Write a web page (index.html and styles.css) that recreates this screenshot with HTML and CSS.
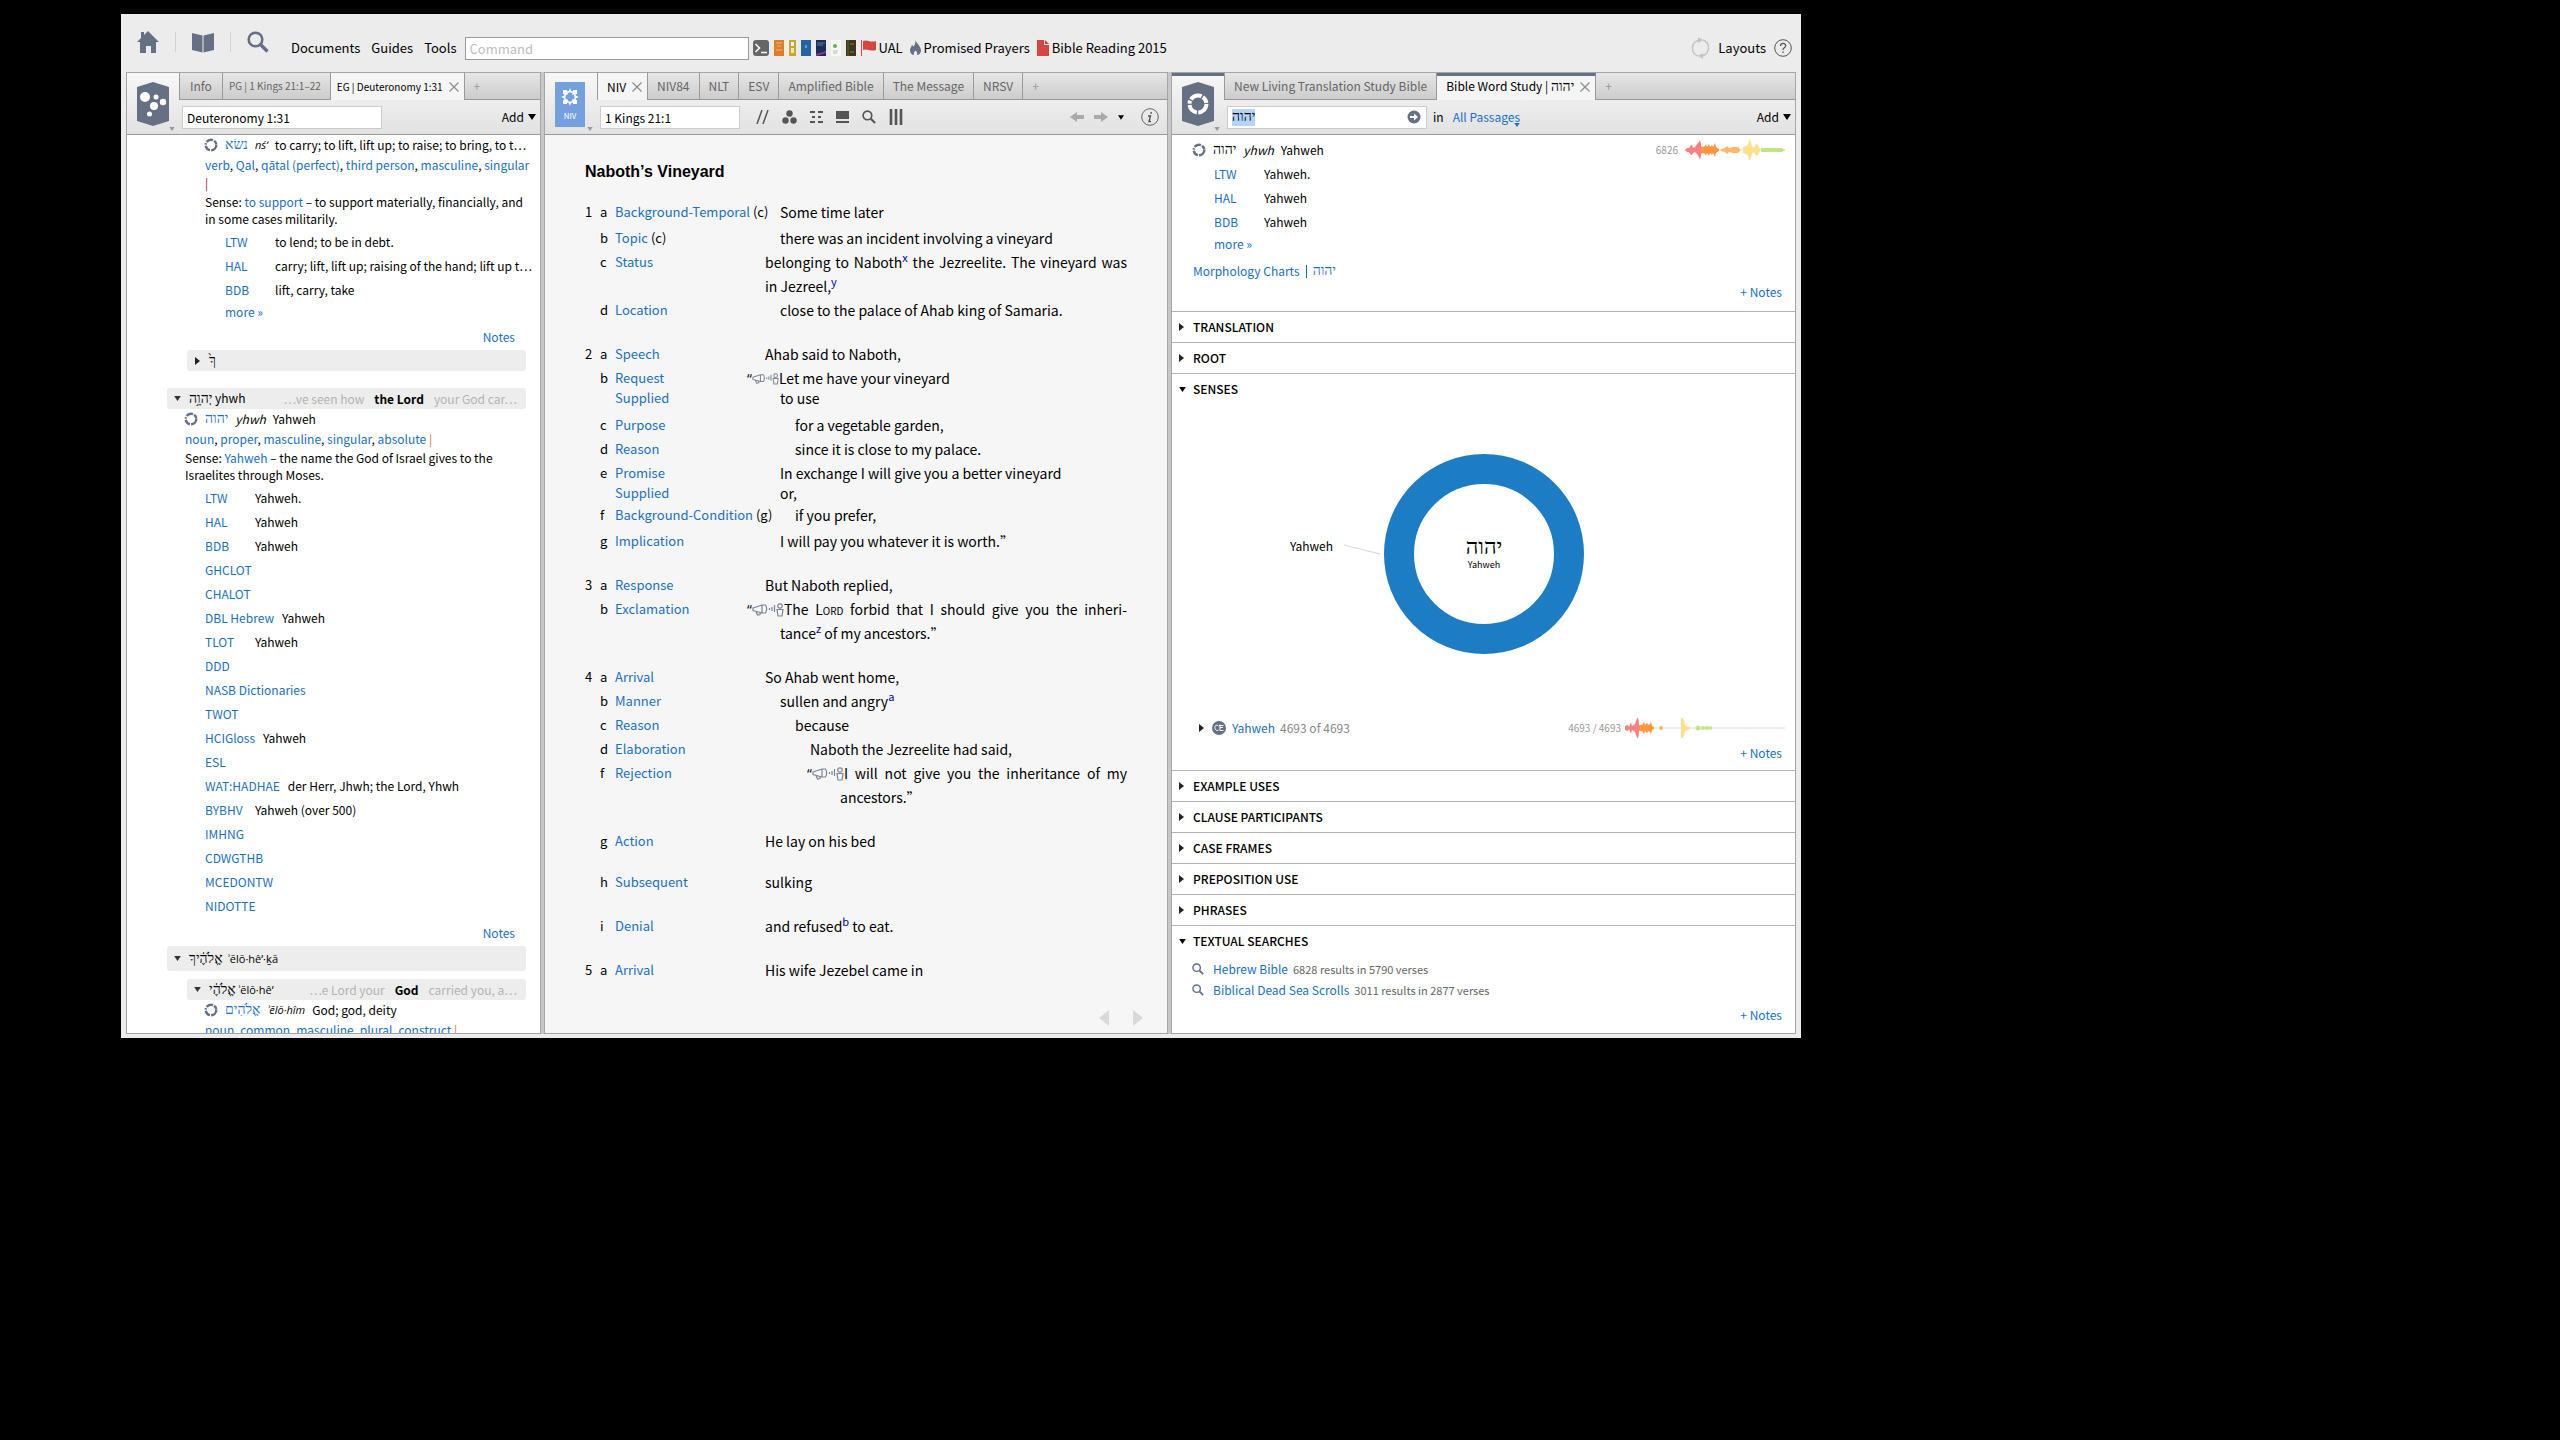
FILE: index.html
```html
<!DOCTYPE html>
<html lang="en">
<head>
    <meta charset="UTF-8">
    <meta name="viewport" content="width=device-width, initial-scale=1.0">
    <title>Bible Word Study</title>
    <link rel="stylesheet" href="styles.css">
</head>
<body>
<!-- shared icons -->
<svg class="sprite" aria-hidden="true">
    <symbol id="ring" viewBox="0 0 14 14">
        <circle cx="7" cy="7" r="5.3" fill="none" stroke="#667085" stroke-width="2.4" stroke-dasharray="8 1.2 6.2 1.2 1.6 1.2 7 1.2 4.5 1.4"/>
    </symbol>
    <symbol id="lens" viewBox="0 0 22 22">
        <circle cx="8.5" cy="8.5" r="6.8" fill="none" stroke="currentColor" stroke-width="2.6"/>
        <path d="M13.5 13.5L20.5 20.5" stroke="currentColor" stroke-width="3.4"/>
    </symbol>
    <symbol id="right" viewBox="0 0 5 8"><path d="M0 0L5 4L0 8z" fill="#222"/></symbol>
    <symbol id="down" viewBox="0 0 8 6"><path d="M0 0H8L4 6z" fill="currentColor"/></symbol>
    <symbol id="close" viewBox="0 0 12 12"><path d="M1.500 1.500L10.500 10.500M10.500 1.500L1.500 10.500" stroke="#8b8b8b" stroke-width="1.200"/></symbol>
    <symbol id="speech" viewBox="0 0 32 14">
        <g fill="none" stroke="#7b8496" stroke-width="1.200">
            <path d="M1 5L10 2H13.500C15 4 15 8 13.500 10H10L1 7.500z M10 2V10 M4 8.500L5.500 12L8 11.500V9.500"/>
            <path d="M17.500 5V7M20 4V8M22.500 2V9"/>
            <circle cx="28" cy="3" r="2.200"/>
            <path d="M25 6.500H31L30 13H26z"/>
        </g>
    </symbol>
</svg>

<div class="app">
    <header class="topbar">
        <div class="launch">
            <button type="button" aria-label="Home">
                <svg width="22" height="22" viewBox="0 0 22 22"><path d="M4 1h3v3l4-4 11 11h-3v11h-5v-7h-5v7H3V11H0L4 7z" fill="#667085"/></svg>
            </button>
            <i class="sep"></i>
            <button type="button" aria-label="Library">
                <svg width="22" height="22" viewBox="0 0 22 22"><path d="M0 2L10.500 4.500V21.500L0 19zM22 2L11.500 4.500V21.500L22 19z" fill="#667085"/></svg>
            </button>
            <i class="sep"></i>
            <button type="button" aria-label="Search">
                <svg class="slate" width="22" height="22"><use href="#lens"/></svg>
            </button>
        </div>
        <nav class="menu">
            <button type="button">Documents</button>
            <button type="button">Guides</button>
            <button type="button">Tools</button>
        </nav>
        <input class="command" type="text" placeholder="Command" aria-label="Command">
        <div class="shortcuts">
            <svg width="16" height="16" viewBox="0 0 16 16"><rect width="16" height="16" rx="3" fill="#666"/><path d="M2.500 4L6.500 8L2.500 12M8 12.500H14" stroke="#fff" stroke-width="1.500" fill="none"/></svg>
            <svg width="10" height="16" viewBox="0 0 10 16"><rect width="10" height="16" fill="#dd7e2b"/><path d="M2 3h6M3 6h4M2 10h6" stroke="#f0b47c"/></svg>
            <svg width="7" height="16" viewBox="0 0 7 16"><rect width="7" height="16" fill="#cfa52a"/><rect x="2" y="2" width="3" height="4" fill="#fff"/><rect x="2" y="8" width="3" height="5" fill="#f3e6b8"/></svg>
            <svg width="10" height="16" viewBox="0 0 10 16"><rect width="10" height="16" fill="#2560a8"/><rect x="4" y="5" width="2" height="3" fill="#6b99cf"/></svg>
            <svg width="10" height="16" viewBox="0 0 10 16"><rect width="10" height="16" fill="#1f2a63"/><path d="M1 3h8M1 5h6" stroke="#4c8a80"/><path d="M0 14L10 11V13L0 16z" fill="#8a3b78"/></svg>
            <svg width="10" height="16" viewBox="0 0 10 16"><rect width="10" height="16" fill="#f6f6f4"/><circle cx="4" cy="6" r="2" fill="#62b35a"/><path d="M2 11h5M2 13h4" stroke="#bbb"/></svg>
            <svg width="10" height="16" viewBox="0 0 10 16"><rect width="10" height="16" fill="#3f371c"/><path d="M2 0V16" stroke="#6a6033"/><path d="M4 4h4M4 12h4" stroke="#8b7f45"/></svg>
            <a href="#"><svg width="15" height="16" viewBox="0 0 15 16"><path d="M.5 0V16" stroke="#d64541"/><path d="M2 1C6-1 9 3 15 1V10C9 12 6 8 2 10z" fill="#d64541"/></svg>UAL</a>
            <a href="#"><svg width="11" height="16" viewBox="0 0 11 16"><path d="M5.500 0C6 3 11 6 11 10.500C11 13 9 15 7 15C7.500 13 7 12 5.500 10.500C4 12 3.500 13 4 15C2 15 0 13 0 10.500C0 8 1.500 7 2 5L3.500 6.500C5 5 5.500 3 5.500 0z" fill="#667085"/></svg>Promised Prayers</a>
            <a href="#"><svg width="12" height="16" viewBox="0 0 12 16"><path d="M0 0H7V5H12V16H0zM8 0L12 4H8z" fill="#d64541"/></svg>Bible Reading 2015</a>
        </div>
        <div class="session">
            <svg width="19" height="22" viewBox="0 0 19 22"><path d="M7 19C-1 16 0 5 8 3M12 3C20 6 19 17 11 19" fill="none" stroke="#c3c3c3" stroke-width="1.400"/><path d="M7 0L12 3L7 6zM12 16L7 19L12 22z" fill="#c3c3c3"/></svg>
            <button type="button">Layouts</button>
            <button type="button" aria-label="Help"><svg width="18" height="18" viewBox="0 0 18 18"><circle cx="9" cy="9" r="8.300" fill="none" stroke="#555"/><path d="M6.500 7C6.500 3.500 11.700 3.500 11.700 6.800C11.700 9 9 8.700 9 11M9 12.500V14" fill="none" stroke="#555" stroke-width="1.300"/></svg></button>
        </div>
    </header>

    <main class="panels">
        <section class="panel guide">
            <div class="panel-head">
                <div class="logo">
                    <svg width="32" height="44" viewBox="0 0 32 44"><path d="M0 5L16 0L32 5V39L16 44L0 39z" fill="#667085"/><g fill="#fff"><circle cx="8" cy="15" r="5"/><circle cx="19" cy="15" r="2.500"/><circle cx="26" cy="20" r="3.200"/><circle cx="17" cy="24" r="4"/><circle cx="12.500" cy="32" r="2.500"/></g></svg>
                    <svg class="logo-arrow" width="6" height="4"><use href="#down"/></svg>
                </div>
                <div class="tabs" role="tablist">
                    <button class="tab roomy" role="tab">Info</button>
                    <button class="tab tight" role="tab">PG | 1 Kings 21:1–22</button>
                    <button class="tab tight active" role="tab">EG | Deuteronomy 1:31 <svg width="12" height="12"><use href="#close"/></svg></button>
                    <button class="tab add-tab" aria-label="New tab">+</button>
                </div>
                <div class="tools">
                    <input class="ref-wide" type="text" value="Deuteronomy 1:31" aria-label="Passage">
                    <button class="add" type="button">Add <svg width="8" height="6"><use href="#down"/></svg></button>
                </div>
            </div>
            <div class="body guide-body">
                <div class="nested">
                    <div class="lemma"><svg width="14" height="14"><use href="#ring"/></svg><a href="#" lang="he">נשׂא</a><em class="translit">nśʼ</em><span class="gloss">to carry; to lift, lift up; to raise; to bring, to t…</span></div>
                    <div class="morph"><a href="#">verb</a>, <a href="#">Qal</a>, <a href="#">qātal (perfect)</a>, <a href="#">third person</a>, <a href="#">masculine</a>, <a href="#">singular</a><br><b class="bar maroon">|</b></div>
                    <p class="sense">Sense: <a href="#">to support</a> – to support materially, financially, and in some cases militarily.</p>
                    <ul class="lexicons">
                        <li><a href="#">LTW</a><span>to lend; to be in debt.</span></li>
                        <li><a href="#">HAL</a><span>carry; lift, lift up; raising of the hand; lift up t…</span></li>
                        <li><a href="#">BDB</a><span>lift, carry, take</span></li>
                    </ul>
                    <a class="more" href="#">more »</a>
                    <a class="notes" href="#">Notes</a>
                    <div class="word"><svg class="tri" width="5" height="8"><use href="#right"/></svg><span lang="he">ךָ֙</span></div>
                </div>
                <div class="word next"><svg class="tri" width="7" height="5"><use href="#down"/></svg><span><span lang="he">יְהוָ֣ה</span> yhwh</span>
                    <span class="context"><span>…ve seen how</span><b>the Lord</b><span>your God car…</span></span></div>
                <div class="entry">
                    <div class="lemma"><svg width="14" height="14"><use href="#ring"/></svg><a href="#" lang="he">יהוה</a><em>yhwh</em><span class="gloss">Yahweh</span></div>
                    <div class="morph"><a href="#">noun</a>, <a href="#">proper</a>, <a href="#">masculine</a>, <a href="#">singular</a>, <a href="#">absolute</a> <b class="bar orange">|</b></div>
                    <p class="sense">Sense: <a href="#">Yahweh</a> – the name the God of Israel gives to the Israelites through Moses.</p>
                    <ul class="lexicons">
                        <li><a href="#">LTW</a><span>Yahweh.</span></li>
                        <li><a href="#">HAL</a><span>Yahweh</span></li>
                        <li><a href="#">BDB</a><span>Yahweh</span></li>
                        <li><a href="#">GHCLOT</a></li>
                        <li><a href="#">CHALOT</a></li>
                        <li><a href="#">DBL Hebrew</a><span>Yahweh</span></li>
                        <li><a href="#">TLOT</a><span>Yahweh</span></li>
                        <li><a href="#">DDD</a></li>
                        <li><a href="#">NASB Dictionaries</a></li>
                        <li><a href="#">TWOT</a></li>
                        <li><a href="#">HCIGloss</a><span>Yahweh</span></li>
                        <li><a href="#">ESL</a></li>
                        <li><a href="#">WAT:HADHAE</a><span>der Herr, Jhwh; the Lord, Yhwh</span></li>
                        <li><a href="#">BYBHV</a><span>Yahweh (over 500)</span></li>
                        <li><a href="#">IMHNG</a></li>
                        <li><a href="#">CDWGTHB</a></li>
                        <li><a href="#">MCEDONTW</a></li>
                        <li><a href="#">NIDOTTE</a></li>
                    </ul>
                    <a class="notes" href="#">Notes</a>
                </div>
                <div class="word tall"><svg class="tri" width="7" height="5"><use href="#down"/></svg><span><span lang="he">אֱלֹהֶ֔יךָ</span> &nbsp;<span class="translit">ʾĕlō·hêʹ·ḵā</span></span></div>
                <div class="nested">
                    <div class="word"><svg class="tri" width="7" height="5"><use href="#down"/></svg><span><span lang="he">אֱלֹהֶ֔י</span> <span class="translit">ʾĕlō·hêʹ</span></span>
                        <span class="context"><span>…e Lord your</span><b>God</b><span>carried you, a…</span></span></div>
                    <div class="lemma"><svg width="14" height="14"><use href="#ring"/></svg><a href="#" lang="he">אֱלֹהִים</a><em class="translit">ʾĕlō·hîm</em><span class="gloss">God; god, deity</span></div>
                    <div class="morph"><a href="#">noun</a>, <a href="#">common</a>, <a href="#">masculine</a>, <a href="#">plural</a>, <a href="#">construct</a> <b class="bar orange">|</b></div>
                </div>
            </div>
        </section>

        <section class="panel bible">
            <div class="panel-head">
                <div class="logo">
                    <svg width="30" height="45" viewBox="0 0 30 45"><rect width="30" height="45" fill="#74a0e0"/><path d="M12 10H14L15 8L16 10H18V12H20V14L22 15L20 16V18H18V20H16L15 22L14 20H12V18H10V16L8 15L10 14V12H12z" fill="none" stroke="#fff" stroke-width="1.500"/><path d="M8 8h4v4h-4zM18 8h4v4h-4zM8 18h4v4h-4zM18 18h4v4h-4z" fill="#fff"/><text class="cover" x="15" y="37" text-anchor="middle">NIV</text></svg>
                    <svg class="logo-arrow" width="6" height="4"><use href="#down"/></svg>
                </div>
                <div class="tabs" role="tablist">
                    <button class="tab active" role="tab">NIV <svg width="12" height="12"><use href="#close"/></svg></button>
                    <button class="tab" role="tab">NIV84</button>
                    <button class="tab" role="tab">NLT</button>
                    <button class="tab" role="tab">ESV</button>
                    <button class="tab" role="tab">Amplified Bible</button>
                    <button class="tab" role="tab">The Message</button>
                    <button class="tab" role="tab">NRSV</button>
                    <button class="tab add-tab" aria-label="New tab">+</button>
                </div>
                <div class="tools">
                    <input class="ref-short" type="text" value="1 Kings 21:1" aria-label="Reference">
                    <div class="view-icons">
                        <svg width="13" height="14" viewBox="0 0 13 14"><path d="M1 14L6 0M7 14L12 0" stroke="#555" stroke-width="1.500"/></svg>
                        <svg width="15" height="14" viewBox="0 0 15 14"><g fill="#555"><circle cx="7.500" cy="3.500" r="3.200"/><circle cx="3.500" cy="10.500" r="3.200"/><circle cx="11.500" cy="10.500" r="3.200"/></g></svg>
                        <svg width="13" height="14" viewBox="0 0 13 14"><path d="M0 2H5M8 2H13M2 7H5M8 7H11M0 12H5M8 12H13" stroke="#555" stroke-width="2"/></svg>
                        <svg width="13" height="14" viewBox="0 0 13 14"><path d="M0 1H13V9H0zM0 11H13V13H0z" fill="#555"/></svg>
                        <svg class="gray" width="14" height="14"><use href="#lens"/></svg>
                        <svg width="14" height="16" viewBox="0 0 14 16"><path d="M2 0V16M7 0V16M12 0V16" stroke="#555" stroke-width="2.600"/></svg>
                    </div>
                    <div class="history">
                        <svg width="14" height="10" viewBox="0 0 14 10"><path d="M0 5L7 0V3H14V7H7V10z" fill="#aaa"/></svg>
                        <svg width="14" height="10" viewBox="0 0 14 10"><path d="M14 5L7 0V3H0V7H7V10z" fill="#aaa"/></svg>
                        <svg width="6" height="5"><use href="#down"/></svg>
                        <svg class="info" width="18" height="18" viewBox="0 0 18 18"><circle cx="9" cy="9" r="8.300" fill="none" stroke="#666"/><path d="M7 8H9.500L8 13.500H10M10.300 4L9.900 5.800" fill="none" stroke="#555" stroke-width="1.400"/></svg>
                    </div>
                </div>
            </div>
            <div class="body text-body">
                <h1>Naboth’s Vineyard</h1>
                <div class="clause"><i>1</i><i>a</i><span><a href="#">Background-Temporal</a> (c)</span><p class="in1">Some time later</p></div>
                <div class="clause gap-xs"><i></i><i>b</i><span><a href="#">Topic</a> (c)</span><p class="in1">there was an incident involving a vineyard</p></div>
                <div class="clause"><i></i><i>c</i><span><a href="#">Status</a></span><p><span class="full">belonging to Naboth<sup>x</sup> the Jezreelite. The vineyard was</span>in Jezreel,<sup>y</sup></p></div>
                <div class="clause"><i></i><i>d</i><span><a href="#">Location</a></span><p class="in1">close to the palace of Ahab king of Samaria.</p></div>

                <div class="clause gap-l"><i>2</i><i>a</i><span><a href="#">Speech</a></span><p>Ahab said to Naboth,</p></div>
                <div class="clause"><i></i><i>b</i><span><a href="#">Request</a></span><p class="in1"><span class="quote">“<svg width="27" height="14"><use href="#speech"/></svg></span>Let me have your vineyard</p></div>
                <div class="clause supplied"><i></i><i></i><span><a href="#">Supplied</a></span><p class="in1">to use</p></div>
                <div class="clause gap-s"><i></i><i>c</i><span><a href="#">Purpose</a></span><p class="in2">for a vegetable garden,</p></div>
                <div class="clause"><i></i><i>d</i><span><a href="#">Reason</a></span><p class="in2">since it is close to my palace.</p></div>
                <div class="clause"><i></i><i>e</i><span><a href="#">Promise</a></span><p class="in1">In exchange I will give you a better vineyard</p></div>
                <div class="clause supplied"><i></i><i></i><span><a href="#">Supplied</a></span><p class="in1">or,</p></div>
                <div class="clause gap-xs"><i></i><i>f</i><span><a href="#">Background-Condition</a> (g)</span><p class="in2">if you prefer,</p></div>
                <div class="clause gap-xs"><i></i><i>g</i><span><a href="#">Implication</a></span><p class="in1">I will pay you whatever it is worth.”</p></div>

                <div class="clause gap-l"><i>3</i><i>a</i><span><a href="#">Response</a></span><p>But Naboth replied,</p></div>
                <div class="clause"><i></i><i>b</i><span><a href="#">Exclamation</a></span><p class="in1"><span class="full"><span class="quote">“<svg width="32" height="14"><use href="#speech"/></svg></span>The <span class="sc">Lord</span> forbid that I should give you the inheri-</span>tance<sup>z</sup> of my ancestors.”</p></div>

                <div class="clause gap-l"><i>4</i><i>a</i><span><a href="#">Arrival</a></span><p>So Ahab went home,</p></div>
                <div class="clause"><i></i><i>b</i><span><a href="#">Manner</a></span><p class="in1">sullen and angry<sup>a</sup></p></div>
                <div class="clause"><i></i><i>c</i><span><a href="#">Reason</a></span><p class="in2">because</p></div>
                <div class="clause"><i></i><i>d</i><span><a href="#">Elaboration</a></span><p class="in3">Naboth the Jezreelite had said,</p></div>
                <div class="clause"><i></i><i>f</i><span><a href="#">Rejection</a></span><p class="in5"><span class="full"><span class="quote">“<svg width="32" height="14"><use href="#speech"/></svg></span>I will not give you the inheritance of my</span>ancestors.”</p></div>

                <div class="clause gap-l"><i></i><i>g</i><span><a href="#">Action</a></span><p>He lay on his bed</p></div>
                <div class="clause gap-m"><i></i><i>h</i><span><a href="#">Subsequent</a></span><p>sulking</p></div>
                <div class="clause gap-l"><i></i><i>i</i><span><a href="#">Denial</a></span><p>and refused<sup>b</sup> to eat.</p></div>
                <div class="clause gap-l"><i>5</i><i>a</i><span><a href="#">Arrival</a></span><p>His wife Jezebel came in</p></div>
                <div class="pager">
                    <button type="button" aria-label="Previous"><svg width="10" height="16" viewBox="0 0 10 16"><path d="M10 0V16L0 8z" fill="#d9d9d9"/></svg></button>
                    <button type="button" aria-label="Next"><svg width="10" height="16" viewBox="0 0 10 16"><path d="M0 0V16L10 8z" fill="#d9d9d9"/></svg></button>
                </div>
            </div>
        </section>

        <section class="panel study focused">
            <div class="panel-head">
                <div class="logo">
                    <svg width="32" height="44" viewBox="0 0 32 44"><path d="M0 5L16 0L32 5V39L16 44L0 39z" fill="#667085"/><circle cx="16" cy="22" r="8.500" fill="none" stroke="#fff" stroke-width="4" stroke-dasharray="13 1.500 11 1.500 3 1.500 12 1.500 7 1.500"/></svg>
                    <svg class="logo-arrow" width="6" height="4"><use href="#down"/></svg>
                </div>
                <div class="tabs" role="tablist">
                    <button class="tab" role="tab">New Living Translation Study Bible</button>
                    <button class="tab active" role="tab"><span>Bible Word Study | <span lang="he">יהוה</span></span> <svg width="12" height="12"><use href="#close"/></svg></button>
                    <button class="tab add-tab" aria-label="New tab">+</button>
                </div>
                <div class="tools">
                    <div class="search">
                        <input class="selected" type="text" value="יהוה" aria-label="Word">
                        <svg width="14" height="14" viewBox="0 0 14 14"><circle cx="7" cy="7" r="6.500" fill="#667085"/><path d="M3 6H7V3.500L11 7L7 10.500V8H3z" fill="#fff"/></svg>
                    </div>
                    <span>in</span>
                    <a class="scope" href="#">All Passages<svg width="6" height="4"><use href="#down"/></svg></a>
                    <button class="add" type="button">Add <svg width="8" height="6"><use href="#down"/></svg></button>
                </div>
            </div>
            <div class="body study-body">
                <div class="summary">
                    <div class="lemma"><svg width="14" height="14"><use href="#ring"/></svg><span lang="he">יהוה</span><em>yhwh</em><span>Yahweh</span>
                        <span class="hits">6826</span>
                        <svg width="100" height="20" viewBox="0 0 100 20">
                            <path d="M0 10H100" stroke="#ddd"/>
                            <path d="M0 10L2 8L4 8L6 5L7 5L8 8L10 7L12 4L14 2L15 0L16 4V16L15 20L14 17L12 14L10 12L8 13L7 15L6 15L4 12L2 12z" fill="#ff8080"/>
                            <path d="M16 6L18 7L20 6L21 4L22 7L24 4L25 7L27 5L28 7L30 3L31 7L34 9V11L31 13L30 17L28 13L27 15L25 13L24 16L22 13L21 16L20 14L18 13L16 14z" fill="#ff9740"/>
                            <path d="M36 9L40 8L42 6L44 8L48 7L53 7L55 9V11L53 13L48 13L44 12L42 14L40 12L36 11z" fill="#ffb86b"/>
                            <path d="M58 7L61 6L63 5L64 0H65L67 6L69 8L71 4L73 5L75 9V11L73 15L71 16L69 12L67 14L65 20H64L63 15L61 14L58 13z" fill="#ffe08a"/>
                            <path d="M76 8H97L100 10L97 12H76z" fill="#c5e386"/>
                        </svg>
                    </div>
                    <ul class="lexicons">
                        <li><a href="#">LTW</a><span>Yahweh.</span></li>
                        <li><a href="#">HAL</a><span>Yahweh</span></li>
                        <li><a href="#">BDB</a><span>Yahweh</span></li>
                    </ul>
                    <a class="more" href="#">more »</a>
                    <div class="charts"><a href="#">Morphology Charts</a><i></i><a href="#" lang="he">יהוה</a></div>
                    <a class="notes" href="#">+ Notes</a>
                </div>
                <section class="fold"><h2><button type="button"><svg width="5" height="8"><use href="#right"/></svg>TRANSLATION</button></h2></section>
                <section class="fold"><h2><button type="button"><svg width="5" height="8"><use href="#right"/></svg>ROOT</button></h2></section>
                <section class="fold"><h2><button type="button"><svg width="7" height="5"><use href="#down"/></svg>SENSES</button></h2>
                    <svg class="donut" width="400" height="300" viewBox="0 0 400 300">
                        <circle cx="200" cy="150" r="85" fill="none" stroke="#1c7dc4" stroke-width="30"/>
                        <path d="M60 141L96 150" stroke="#d5d5d5"/>
                        <text x="49" y="147" text-anchor="end">Yahweh</text>
                        <text class="he-big" x="200" y="150" text-anchor="middle">יהוה</text>
                        <text class="tiny" x="200" y="164" text-anchor="middle">Yahweh</text>
                    </svg>
                    <div class="sense-row">
                        <svg width="5" height="8"><use href="#right"/></svg>
                        <svg class="badge" width="14" height="14" viewBox="0 0 14 14"><circle cx="7" cy="7" r="7" fill="#667085"/><path d="M6.500 5C3.500 2.500 2 6 3.500 8.500C4.500 10 6 9.500 6.500 9M8 3.500V9.500H11.500M8 6.500H11M7 4.500H11.500" fill="none" stroke="#fff"/></svg>
                        <a href="#">Yahweh</a><span class="count">4693 of 4693</span>
                        <span class="hits">4693 / 4693</span>
                        <svg width="160" height="20" viewBox="0 0 160 20">
                            <path d="M0 10H160" stroke="#ddd"/>
                            <path d="M0 8L3 7L4 9L6 4L7 8L10 6L12 0H13L14 5V15L13 20H12L10 14L7 12L6 16L4 11L3 13L0 12z" fill="#ff8080"/>
                            <path d="M14 7L17 7L19 4L20 7L22 5L24 7L26 4L27 8L29 9V11L27 12L26 16L24 13L22 15L20 13L19 16L17 13L14 13z" fill="#ff9740"/>
                            <circle cx="36" cy="10" r="2" fill="#ffb86b"/>
                            <path d="M56 0H58L60 6L62 9L65 9V11L62 12L60 14L58 20H56z" fill="#ffe08a"/>
                            <g fill="#c5e386"><circle cx="73" cy="10" r="2.500"/><circle cx="78" cy="10" r="2"/><circle cx="82" cy="10" r="2"/><rect x="84" y="8.500" width="3" height="3"/></g>
                        </svg>
                    </div>
                    <a class="notes" href="#">+ Notes</a>
                </section>
                <section class="fold"><h2><button type="button"><svg width="5" height="8"><use href="#right"/></svg>EXAMPLE USES</button></h2></section>
                <section class="fold"><h2><button type="button"><svg width="5" height="8"><use href="#right"/></svg>CLAUSE PARTICIPANTS</button></h2></section>
                <section class="fold"><h2><button type="button"><svg width="5" height="8"><use href="#right"/></svg>CASE FRAMES</button></h2></section>
                <section class="fold"><h2><button type="button"><svg width="5" height="8"><use href="#right"/></svg>PREPOSITION USE</button></h2></section>
                <section class="fold"><h2><button type="button"><svg width="5" height="8"><use href="#right"/></svg>PHRASES</button></h2></section>
                <section class="fold"><h2><button type="button"><svg width="7" height="5"><use href="#down"/></svg>TEXTUAL SEARCHES</button></h2>
                    <div class="results">
                        <div class="result"><svg class="slate" width="12" height="12"><use href="#lens"/></svg><a href="#">Hebrew Bible</a><span>6828 results in 5790 verses</span></div>
                        <div class="result"><svg class="slate" width="12" height="12"><use href="#lens"/></svg><a href="#">Biblical Dead Sea Scrolls</a><span>3011 results in 2877 verses</span></div>
                    </div>
                    <a class="notes" href="#">+ Notes</a>
                </section>
            </div>
        </section>
    </main>
</div>
</body>
</html>
```

FILE: styles.css
```css
* {
    box-sizing: border-box;
}

body {
    margin: 0;
    padding: 14px 759px 402px 121px;
    height: 100vh;
    background: #000;
    color: #000;
    font-family: "Noto Sans CJK SC", "Noto Sans", sans-serif;
    font-size: 12px;
    line-height: 18px;
}

button, input {
    font: inherit;
    color: inherit;
}

button {
    padding: 0;
    border: 0;
    background: none;
}

a {
    color: #1a70c7;
    text-decoration: none;
}

svg {
    flex: none;
    display: block;
}

p, ul, h1, h2 {
    margin: 0;
    padding: 0;
    list-style: none;
}

[lang="he"] {
    font-family: "Liberation Serif", serif;
    font-size: 14px;
}

/* scholarly letters such as ʾ and ḵ */
.translit {
    font-family: "Open Sans", "Noto Sans", sans-serif;
    font-size: 11px;
}

.sprite {
    position: absolute;
    width: 0;
    height: 0;
}

.slate {
    color: #667085;
}

.gray {
    color: #555;
}

.app {
    display: flex;
    flex-direction: column;
    height: 100%;
    padding: 0 5px 4px;
    background: #ececec;
}

/* top bar */
.topbar {
    display: flex;
    align-items: flex-start;
    flex: none;
    height: 58px;
    padding: 17px 4px 0 11px;
    font-size: 13px;
}

.launch, .menu, .shortcuts, .shortcuts a, .session {
    display: flex;
    align-items: center;
}

.launch {
    gap: 16px;
    height: 22px;
}

.sep {
    width: 1px;
    height: 20px;
    background: #d2d2d2;
}

.menu {
    gap: 11px;
    height: 34px;
    margin: 0 8px 0 22px;
}

.command {
    width: 284px;
    height: 23px;
    margin-top: 6px;
    padding: 0 4px;
    border: 1px solid #999;
    background: #fff;
}

.command::placeholder {
    color: #bdbdbd;
}

.shortcuts {
    gap: 5px;
    height: 34px;
    margin-left: 4px;
}

.shortcuts a {
    gap: 3px;
    margin-right: 2px;
    color: #000;
}

.session {
    gap: 8px;
    height: 34px;
    margin-left: auto;
}

/* panels */
.panels {
    display: grid;
    grid-template-columns: 415fr 624fr 625fr;
    gap: 3px;
    flex: 1;
    min-height: 0;
    background: #c8c8c8;
}

.panel {
    display: flex;
    flex-direction: column;
    min-width: 0;
    min-height: 0;
    border: 1px solid #a5a5a5;
    background: #fff;
}

.panel-head {
    display: grid;
    grid-template-columns: 52px 1fr;
    grid-template-rows: 27px 34px;
    flex: none;
    border-bottom: 1px solid #999;
    background: linear-gradient(#f7f7f7, #e2e2e2);
}

.logo {
    position: relative;
    grid-row: 1 / 3;
    padding: 9px 0 0 10px;
}

.logo-arrow {
    position: absolute;
    right: 4px;
    bottom: 3px;
    color: #999;
}

.cover {
    font-size: 8px;
    fill: #fff;
}

.focused .logo, .focused .tab.active {
    border-top: 3px solid #667085;
}

.focused .logo {
    padding-top: 6px;
}

.tabs {
    display: flex;
    min-width: 0;
    border-left: 1px solid #999;
    background: linear-gradient(#e6e6e6, #cbcbcb);
}

.tab {
    display: flex;
    align-items: center;
    gap: 5px;
    flex: none;
    padding: 0 9px;
    border-right: 1px solid #999;
    border-bottom: 1px solid #999;
    color: #666;
    white-space: nowrap;
}

.tab.active {
    padding-right: 4px;
    border-bottom: 0;
    background: #f5f5f5;
    color: #000;
}

.focused .tab.active {
    padding-bottom: 3px;
}

.tab.roomy {
    padding: 0 10px;
}

.tab.tight {
    padding-left: 6px;
    font-size: 10px;
}

.tab.add-tab {
    flex: 1;
    border-right: 0;
    color: #999;
}

.tools {
    display: flex;
    align-items: center;
    padding: 0 4px 0 3px;
}

.tools input {
    height: 23px;
    padding: 0 4px;
    border: 1px solid #ccc;
    background: #fff;
}

.ref-wide {
    width: 200px;
}

.ref-short {
    width: 140px;
}

.add {
    display: flex;
    align-items: center;
    gap: 4px;
    margin-left: auto;
}

.view-icons, .history {
    display: flex;
    align-items: center;
    gap: 13px;
}

.view-icons {
    margin-left: 16px;
}

.history {
    gap: 10px;
    margin: 0 4px 0 auto;
}

.info {
    margin-left: 7px;
}

.search {
    display: flex;
    align-items: center;
    width: 200px;
    height: 23px;
    margin-right: 6px;
    padding-right: 5px;
    border: 1px solid #ccc;
    background: #fff;
}

.tools .selected {
    flex: 1;
    min-width: 0;
    height: 21px;
    border: 0;
    background: linear-gradient(#b3d3fb, #b3d3fb) 4px center / 23px 17px no-repeat;
    font-family: "Liberation Serif", serif;
    font-size: 14px;
}

.scope {
    position: relative;
    margin-left: 9px;
}

.scope svg {
    position: absolute;
    right: 0;
    bottom: -1px;
}

.body {
    display: flex;
    flex-direction: column;
    flex: 1;
    min-height: 0;
    overflow: hidden;
}

.body > * {
    flex: none;
}

/* exegetical guide */
.guide-body {
    padding: 0 14px 0 40px;
}

.nested {
    padding-left: 20px;
}

.lemma {
    display: flex;
    align-items: center;
    gap: 7px;
    height: 19px;
    margin-left: 17px;
    white-space: nowrap;
}

.morph, .sense {
    margin-left: 18px;
}

.morph {
    margin-top: 2px;
    white-space: nowrap;
}

.bar {
    font-weight: normal;
}

.maroon {
    color: #a01838;
}

.orange {
    color: #d97a2b;
}

.sense {
    margin-top: 1px;
    line-height: 17px;
}

.lexicons {
    margin: 3px 0 0 38px;
}

.lexicons li {
    display: flex;
    gap: 8px;
    line-height: 24px;
    white-space: nowrap;
}

.lexicons a {
    flex: none;
    min-width: 42px;
}

.more {
    margin-left: 38px;
    line-height: 20px;
}

.notes {
    display: block;
    margin: 6px 11px 4px auto;
    text-align: right;
}

.word {
    display: flex;
    align-items: center;
    height: 21px;
    border-radius: 3px;
    background: #ededed;
    white-space: nowrap;
}

.tri {
    width: 7px;
    margin: 0 8px 0 7px;
    color: #333;
}

.next {
    margin-top: 17px;
}

.tall {
    height: 25px;
    margin-bottom: 8px;
}

.context {
    display: flex;
    gap: 10px;
    margin: 0 9px 0 auto;
    color: #b3b3b3;
}

.context b {
    color: #000;
}

/* bible text */
.text-body {
    padding: 25px 40px 7px;
    background: #f6f6f6;
}

h1 {
    margin-bottom: 16px;
    font-family: "Liberation Sans", sans-serif;
    font-size: 16px;
    line-height: 24px;
}

.clause {
    display: grid;
    grid-template-columns: 15px 15px 150px 1fr;
    font-size: 13px;
    line-height: 24px;
}

.clause > i {
    font-style: normal;
}

.clause > span {
    white-space: nowrap;
}

.clause p {
    font-size: 14px;
    white-space: nowrap;
}

.clause sup {
    font-size: 11px;
    line-height: 0;
    color: #00a;
}

.supplied {
    line-height: 16px;
}

.gap-xs {
    margin-top: 2px;
}

.gap-s {
    margin-top: 7px;
}

.gap-m {
    margin-top: 17px;
}

.gap-l {
    margin-top: 20px;
}

.clause .in1 {
    padding-left: 15px;
}

.clause .in2 {
    padding-left: 30px;
}

.clause .in3 {
    padding-left: 45px;
}

.clause .in5 {
    padding-left: 75px;
}

.quote {
    display: inline-flex;
    align-items: center;
    height: 16px;
    margin-left: -33px;
    font-family: "Open Sans", sans-serif;
}

/* a line that fills the column */
.full {
    display: block;
    text-align: justify;
    text-align-last: justify;
    white-space: normal;
}

.sc {
    font-variant: small-caps;
}

.pager {
    display: flex;
    justify-content: flex-end;
    gap: 24px;
    margin: auto -16px 0 0;
}

/* word study */
.study-body {
    padding-top: 5px;
}

.summary {
    display: flex;
    flex-direction: column;
    padding-bottom: 6px;
}

.summary .lemma {
    margin-left: 20px;
    padding-right: 10px;
}

.summary .lexicons, .summary .more {
    margin-left: 42px;
}

.hits {
    margin-left: auto;
    color: #999;
    font-size: 10px;
}

.charts {
    display: flex;
    align-items: center;
    height: 18px;
    margin: 8px 0 0 21px;
}

.charts i {
    width: 1px;
    height: 13px;
    margin: 0 6px;
    background: #1a70c7;
}

.study-body .notes {
    margin: 3px 13px 4px auto;
}

.study-body .fold .notes {
    margin: 6px 13px 8px auto;
}

.fold {
    border-top: 1px solid #b3b3b3;
}

.fold h2 {
    font-size: 12px;
    font-weight: 500;
    line-height: 30px;
}

.fold h2 button {
    display: grid;
    grid-template-columns: 14px auto;
    align-items: center;
    margin-left: 7px;
    color: #000;
}

.donut {
    margin: 0 auto;
}

.he-big {
    font-family: "Liberation Serif", serif;
    font-size: 22px;
}

.tiny {
    font-size: 9px;
}

.sense-row {
    display: flex;
    align-items: center;
    height: 20px;
    margin-top: 14px;
    padding: 0 10px 0 27px;
}

.badge {
    margin: 0 6px 0 8px;
}

.count {
    margin-left: 5px;
    color: #888;
}

.sense-row .hits {
    margin-right: 4px;
}

.results {
    padding-top: 2px;
}

.result {
    display: flex;
    align-items: center;
    height: 21px;
    padding-left: 20px;
}

.result a {
    margin: 0 5px 0 9px;
}

.result span {
    color: #666;
    font-size: 11px;
}
```
